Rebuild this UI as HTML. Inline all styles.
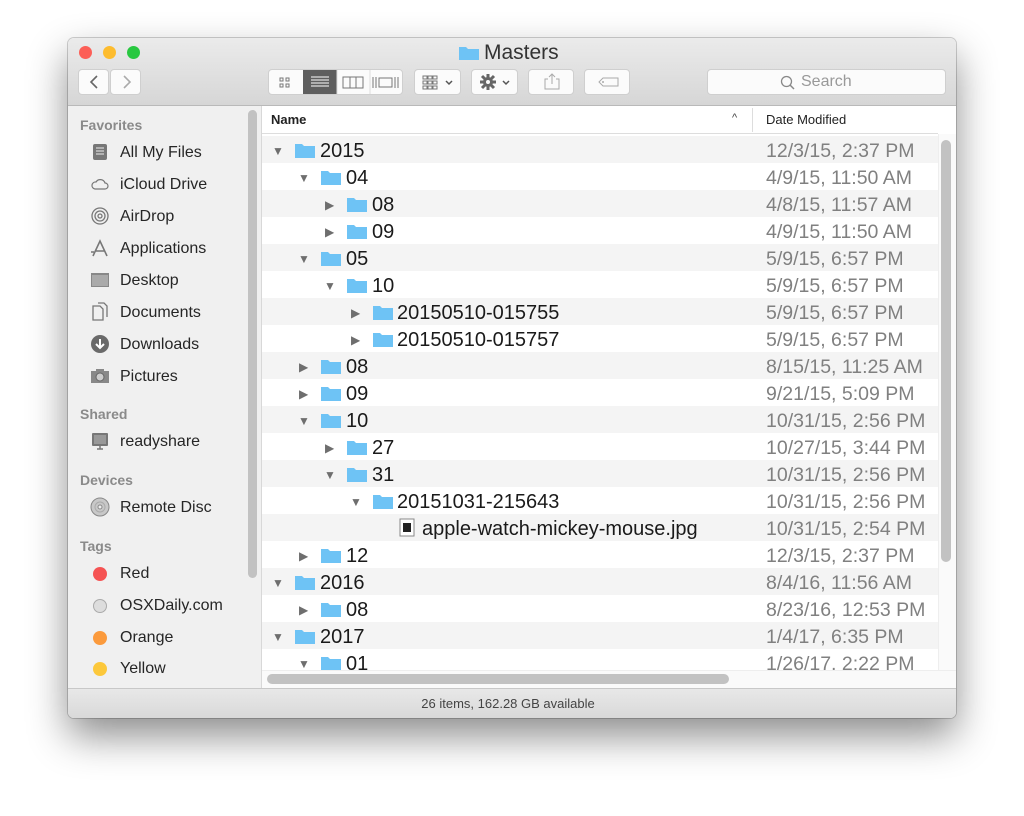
<!DOCTYPE html>
<html><head><meta charset="utf-8"><style>
*{margin:0;padding:0;box-sizing:border-box}
body{width:1024px;height:816px;background:#fff;position:relative;overflow:hidden;font-family:"Liberation Sans",sans-serif}
.a{position:absolute}
#win{left:68px;top:38px;width:888px;height:680px;border-radius:6px;background:#fff;box-shadow:0 18px 40px rgba(0,0,0,.45),0 0 0 1px rgba(0,0,0,.18);overflow:hidden}
#tb{left:0;top:0;width:888px;height:68px;background:linear-gradient(#ebebeb,#d6d6d6);border-bottom:1px solid #b9b9b9}
.dot{width:13px;height:13px;border-radius:50%;top:8px}
.btn{background:#fbfbfb;border:1px solid #cfcfcf;border-radius:4px;height:26px;top:31px}
#side{left:0;top:68px;width:194px;height:582px;background:#f0f0f0;border-right:1px solid #d8d8d8}
.sh{left:12px;font-size:14px;font-weight:bold;color:#8a8a8a}
.si{left:52px;font-size:16px;color:#262626}
.ic{left:22px;width:20px;height:20px}
.row{left:194px;width:676px;height:27px}
.row.g{background:#f4f4f4}
.nm{font-size:20px;color:#1a1a1a;top:4px}
.dt{right:0;width:176px;font-size:19.5px;color:#808080;top:4px;left:504px}
.tri{font-size:12px;color:#6e6e6e;top:8px}
</style></head><body>
<div id="win" class="a">
 <div id="tb" class="a">
  <div class="a dot" style="left:11px;background:#fc5f57"></div>
  <div class="a dot" style="left:35px;background:#fdbc2e"></div>
  <div class="a dot" style="left:59px;background:#28c840"></div>
  <svg class="a" style="left:390px;top:6px" width="22" height="17"><path d="M1 3h7l2 2h11v11H1z" fill="#6ec3f5"/></svg>
  <div class="a" style="left:416px;top:3px;font-size:21px;color:#333">Masters</div>
  <div class="a btn" style="left:10px;width:31px"><svg width="31" height="24"><path d="M18 6l-6 6 6 6" stroke="#666" stroke-width="1.6" fill="none"/></svg></div>
  <div class="a btn" style="left:42px;width:31px"><svg width="31" height="24"><path d="M13 6l6 6-6 6" stroke="#aaa" stroke-width="1.6" fill="none"/></svg></div>
  <div class="a btn" style="left:200px;width:135px;overflow:hidden">
   <svg class="a" style="left:0;top:0" width="135" height="24">
    <g stroke="#777" fill="none" stroke-width="1"><rect x="11" y="8" width="3" height="3"/><rect x="17" y="8" width="3" height="3"/><rect x="11" y="14" width="3" height="3"/><rect x="17" y="14" width="3" height="3"/></g>
    <rect x="34" y="0" width="34" height="24" fill="#5f5f5f"/>
    <g stroke="#fff" stroke-width="1"><path d="M42 7h18M42 10h18M42 13h18M42 16h18"/></g>
    <rect x="74" y="7" width="20" height="11" stroke="#777" fill="none"/><path d="M81 7v11M87 7v11" stroke="#777"/>
    <path d="M104 7v11M107 7v11M126 7v11M129 7v11" stroke="#777"/><rect x="110" y="8" width="13" height="9" stroke="#777" fill="none"/>
    <path d="M68 0v24M101 0v24" stroke="#ddd"/>
   </svg>
  </div>
  <div class="a btn" style="left:346px;width:47px"><svg width="47" height="24"><g fill="none" stroke="#777"><rect x="8" y="6" width="4" height="3"/><rect x="13" y="6" width="4" height="3"/><rect x="18" y="6" width="4" height="3"/><rect x="8" y="11" width="4" height="3"/><rect x="13" y="11" width="4" height="3"/><rect x="18" y="11" width="4" height="3"/><rect x="8" y="16" width="4" height="3"/><rect x="13" y="16" width="4" height="3"/><rect x="18" y="16" width="4" height="3"/></g><path d="M31 11l3 3 3-3" stroke="#555" stroke-width="1.5" fill="none"/></svg></div>
  <div class="a btn" style="left:403px;width:47px"><svg width="47" height="24"><circle cx="16" cy="12" r="5" fill="#666"/><g stroke="#666" stroke-width="3"><path d="M16 4v16M8 12h16M10 6l12 12M22 6L10 18"/></g><circle cx="16" cy="12" r="2" fill="#fbfbfb"/><path d="M31 11l3 3 3-3" stroke="#555" stroke-width="1.5" fill="none"/></svg></div>
  <div class="a btn" style="left:460px;width:46px"><svg width="46" height="24"><path d="M19 9h-3v10h14V9h-3M23 4v10M20 7l3-3 3 3" stroke="#aaa" fill="none"/></svg></div>
  <div class="a btn" style="left:516px;width:46px"><svg width="46" height="24"><path d="M14 12l4-4h15v8H18z" stroke="#aaa" fill="none"/><circle cx="18" cy="12" r="1" fill="#aaa"/></svg></div>
  <div class="a btn" style="left:639px;width:239px"><svg class="a" style="left:72px;top:5px" width="16" height="16"><circle cx="6.5" cy="6.5" r="5" stroke="#888" stroke-width="1.3" fill="none"/><path d="M10 10l4 4" stroke="#888" stroke-width="1.5"/></svg><div class="a" style="left:93px;top:3px;font-size:16px;color:#999">Search</div></div>
 </div>
 <div id="side" class="a">
  <div class="a sh" style="top:11px">Favorites</div>
  <svg class="a ic" style="top:36px" viewBox="0 0 20 20"><rect x="3" y="2" width="14" height="16" rx="2" fill="#777"/><path d="M6 6h8M6 9h8M6 12h8" stroke="#eee"/></svg><div class="a si" style="top:38px">All My Files</div>
  <svg class="a ic" style="top:68px" viewBox="0 0 20 20"><path d="M5 15h10a3 3 0 0 0 0-6 5 5 0 0 0-9-1 3.5 3.5 0 0 0-1 7z" stroke="#777" fill="none" stroke-width="1.2"/></svg><div class="a si" style="top:70px">iCloud Drive</div>
  <svg class="a ic" style="top:100px" viewBox="0 0 20 20"><g stroke="#777" fill="none" stroke-width="1.3"><circle cx="10" cy="10" r="8"/><circle cx="10" cy="10" r="5"/><circle cx="10" cy="10" r="2"/></g></svg><div class="a si" style="top:102px">AirDrop</div>
  <svg class="a ic" style="top:132px" viewBox="0 0 20 20"><path d="M3 18L10 3l7 15M5 13h10M1 14h3" stroke="#777" stroke-width="1.6" fill="none"/></svg><div class="a si" style="top:134px">Applications</div>
  <svg class="a ic" style="top:164px" viewBox="0 0 20 20"><rect x="1" y="3" width="18" height="14" fill="#888"/><rect x="2" y="5" width="16" height="11" fill="#aaa"/></svg><div class="a si" style="top:166px">Desktop</div>
  <svg class="a ic" style="top:196px" viewBox="0 0 20 20"><path d="M3 4h7l3 3v11H3z M8 1h6l3 3v11" stroke="#777" stroke-width="1.3" fill="#f0f0f0"/></svg><div class="a si" style="top:198px">Documents</div>
  <svg class="a ic" style="top:228px" viewBox="0 0 20 20"><circle cx="10" cy="10" r="9" fill="#6a6a6a"/><path d="M10 5v8M6 10l4 4 4-4" stroke="#fff" stroke-width="2" fill="none"/></svg><div class="a si" style="top:230px">Downloads</div>
  <svg class="a ic" style="top:260px" viewBox="0 0 20 20"><rect x="1" y="5" width="18" height="12" fill="#888"/><rect x="6" y="3" width="8" height="3" fill="#888"/><circle cx="10" cy="11" r="4" fill="#ccc" stroke="#666"/></svg><div class="a si" style="top:262px">Pictures</div>
  <div class="a sh" style="top:300px">Shared</div>
  <svg class="a ic" style="top:325px" viewBox="0 0 20 20"><rect x="2" y="2" width="16" height="13" rx="1" fill="#777"/><rect x="4" y="4" width="12" height="9" fill="#999"/><path d="M7 18h6M10 15v3" stroke="#777" stroke-width="1.5"/></svg><div class="a si" style="top:327px">readyshare</div>
  <div class="a sh" style="top:366px">Devices</div>
  <svg class="a ic" style="top:391px" viewBox="0 0 20 20"><circle cx="10" cy="10" r="9" fill="#c8c8c8" stroke="#888"/><circle cx="10" cy="10" r="5" fill="none" stroke="#aaa"/><circle cx="10" cy="10" r="2" fill="#eee" stroke="#888"/></svg><div class="a si" style="top:393px">Remote Disc</div>
  <div class="a sh" style="top:432px">Tags</div>
  <div class="a" style="left:25px;top:461px;width:14px;height:14px;border-radius:50%;background:#f55353"></div><div class="a si" style="top:459px">Red</div>
  <div class="a" style="left:25px;top:493px;width:14px;height:14px;border-radius:50%;background:#ddd;border:1px solid #aaa"></div><div class="a si" style="top:491px">OSXDaily.com</div>
  <div class="a" style="left:25px;top:525px;width:14px;height:14px;border-radius:50%;background:#fb9a3c"></div><div class="a si" style="top:523px">Orange</div>
  <div class="a" style="left:25px;top:556px;width:14px;height:14px;border-radius:50%;background:#fcc83b"></div><div class="a si" style="top:554px">Yellow</div>
  <div class="a" style="left:180px;top:4px;width:9px;height:468px;border-radius:5px;background:#c2c2c2"></div>
 </div>
 <div class="a" style="left:194px;top:68px;width:676px;height:28px;background:#fff;border-bottom:1px solid #ddd"></div>
 <div class="a" style="left:203px;top:74px;font-size:13px;font-weight:bold;color:#222">Name</div>
 <div class="a" style="left:664px;top:74px;font-size:11px;color:#444">^</div>
 <div class="a" style="left:684px;top:70px;width:1px;height:24px;background:#ddd"></div>
 <div class="a" style="left:698px;top:74px;font-size:13px;color:#222">Date Modified</div>
 <div class="a" style="left:-68px;top:-38px">
  <div class="a row g" style="top:136px;left:262px"><span class="a tri" style="left:10px">▼</span><svg class="a" style="left:33px;top:6px" width="20" height="16"><path d="M0 2h7l2 2h11v12H0z" fill="#6ec3f5"/></svg><span class="a nm" style="left:58px">2015</span><span class="a dt">12/3/15, 2:37 PM</span></div>
  <div class="a row" style="top:163px;left:262px"><span class="a tri" style="left:36px">▼</span><svg class="a" style="left:59px;top:6px" width="20" height="16"><path d="M0 2h7l2 2h11v12H0z" fill="#6ec3f5"/></svg><span class="a nm" style="left:84px">04</span><span class="a dt">4/9/15, 11:50 AM</span></div>
  <div class="a row g" style="top:190px;left:262px"><span class="a tri" style="left:63px">▶</span><svg class="a" style="left:85px;top:6px" width="20" height="16"><path d="M0 2h7l2 2h11v12H0z" fill="#6ec3f5"/></svg><span class="a nm" style="left:110px">08</span><span class="a dt">4/8/15, 11:57 AM</span></div>
  <div class="a row" style="top:217px;left:262px"><span class="a tri" style="left:63px">▶</span><svg class="a" style="left:85px;top:6px" width="20" height="16"><path d="M0 2h7l2 2h11v12H0z" fill="#6ec3f5"/></svg><span class="a nm" style="left:110px">09</span><span class="a dt">4/9/15, 11:50 AM</span></div>
  <div class="a row g" style="top:244px;left:262px"><span class="a tri" style="left:36px">▼</span><svg class="a" style="left:59px;top:6px" width="20" height="16"><path d="M0 2h7l2 2h11v12H0z" fill="#6ec3f5"/></svg><span class="a nm" style="left:84px">05</span><span class="a dt">5/9/15, 6:57 PM</span></div>
  <div class="a row" style="top:271px;left:262px"><span class="a tri" style="left:62px">▼</span><svg class="a" style="left:85px;top:6px" width="20" height="16"><path d="M0 2h7l2 2h11v12H0z" fill="#6ec3f5"/></svg><span class="a nm" style="left:110px">10</span><span class="a dt">5/9/15, 6:57 PM</span></div>
  <div class="a row g" style="top:298px;left:262px"><span class="a tri" style="left:89px">▶</span><svg class="a" style="left:111px;top:6px" width="20" height="16"><path d="M0 2h7l2 2h11v12H0z" fill="#6ec3f5"/></svg><span class="a nm" style="left:135px">20150510-015755</span><span class="a dt">5/9/15, 6:57 PM</span></div>
  <div class="a row" style="top:325px;left:262px"><span class="a tri" style="left:89px">▶</span><svg class="a" style="left:111px;top:6px" width="20" height="16"><path d="M0 2h7l2 2h11v12H0z" fill="#6ec3f5"/></svg><span class="a nm" style="left:135px">20150510-015757</span><span class="a dt">5/9/15, 6:57 PM</span></div>
  <div class="a row g" style="top:352px;left:262px"><span class="a tri" style="left:37px">▶</span><svg class="a" style="left:59px;top:6px" width="20" height="16"><path d="M0 2h7l2 2h11v12H0z" fill="#6ec3f5"/></svg><span class="a nm" style="left:84px">08</span><span class="a dt">8/15/15, 11:25 AM</span></div>
  <div class="a row" style="top:379px;left:262px"><span class="a tri" style="left:37px">▶</span><svg class="a" style="left:59px;top:6px" width="20" height="16"><path d="M0 2h7l2 2h11v12H0z" fill="#6ec3f5"/></svg><span class="a nm" style="left:84px">09</span><span class="a dt">9/21/15, 5:09 PM</span></div>
  <div class="a row g" style="top:406px;left:262px"><span class="a tri" style="left:36px">▼</span><svg class="a" style="left:59px;top:6px" width="20" height="16"><path d="M0 2h7l2 2h11v12H0z" fill="#6ec3f5"/></svg><span class="a nm" style="left:84px">10</span><span class="a dt">10/31/15, 2:56 PM</span></div>
  <div class="a row" style="top:433px;left:262px"><span class="a tri" style="left:63px">▶</span><svg class="a" style="left:85px;top:6px" width="20" height="16"><path d="M0 2h7l2 2h11v12H0z" fill="#6ec3f5"/></svg><span class="a nm" style="left:110px">27</span><span class="a dt">10/27/15, 3:44 PM</span></div>
  <div class="a row g" style="top:460px;left:262px"><span class="a tri" style="left:62px">▼</span><svg class="a" style="left:85px;top:6px" width="20" height="16"><path d="M0 2h7l2 2h11v12H0z" fill="#6ec3f5"/></svg><span class="a nm" style="left:110px">31</span><span class="a dt">10/31/15, 2:56 PM</span></div>
  <div class="a row" style="top:487px;left:262px"><span class="a tri" style="left:88px">▼</span><svg class="a" style="left:111px;top:6px" width="20" height="16"><path d="M0 2h7l2 2h11v12H0z" fill="#6ec3f5"/></svg><span class="a nm" style="left:135px">20151031-215643</span><span class="a dt">10/31/15, 2:56 PM</span></div>
  <div class="a row g" style="top:514px;left:262px"><svg class="a" style="left:137px;top:4px" width="16" height="19"><rect x="1" y="1" width="14" height="17" fill="#fff" stroke="#888"/><rect x="4" y="5" width="8" height="9" fill="#222"/></svg><span class="a nm" style="left:160px">apple-watch-mickey-mouse.jpg</span><span class="a dt">10/31/15, 2:54 PM</span></div>
  <div class="a row" style="top:541px;left:262px"><span class="a tri" style="left:37px">▶</span><svg class="a" style="left:59px;top:6px" width="20" height="16"><path d="M0 2h7l2 2h11v12H0z" fill="#6ec3f5"/></svg><span class="a nm" style="left:84px">12</span><span class="a dt">12/3/15, 2:37 PM</span></div>
  <div class="a row g" style="top:568px;left:262px"><span class="a tri" style="left:10px">▼</span><svg class="a" style="left:33px;top:6px" width="20" height="16"><path d="M0 2h7l2 2h11v12H0z" fill="#6ec3f5"/></svg><span class="a nm" style="left:58px">2016</span><span class="a dt">8/4/16, 11:56 AM</span></div>
  <div class="a row" style="top:595px;left:262px"><span class="a tri" style="left:37px">▶</span><svg class="a" style="left:59px;top:6px" width="20" height="16"><path d="M0 2h7l2 2h11v12H0z" fill="#6ec3f5"/></svg><span class="a nm" style="left:84px">08</span><span class="a dt">8/23/16, 12:53 PM</span></div>
  <div class="a row g" style="top:622px;left:262px"><span class="a tri" style="left:10px">▼</span><svg class="a" style="left:33px;top:6px" width="20" height="16"><path d="M0 2h7l2 2h11v12H0z" fill="#6ec3f5"/></svg><span class="a nm" style="left:58px">2017</span><span class="a dt">1/4/17, 6:35 PM</span></div>
  <div class="a row" style="top:649px;left:262px"><span class="a tri" style="left:36px">▼</span><svg class="a" style="left:59px;top:6px" width="20" height="16"><path d="M0 2h7l2 2h11v12H0z" fill="#6ec3f5"/></svg><span class="a nm" style="left:84px">01</span><span class="a dt">1/26/17, 2:22 PM</span></div>
 </div>
 <div class="a" style="left:870px;top:96px;width:18px;height:554px;background:#fafafa;border-left:1px solid #eee"></div>
 <div class="a" style="left:873px;top:102px;width:10px;height:422px;border-radius:5px;background:#c2c2c2"></div>
 <div class="a" style="left:194px;top:632px;width:694px;height:18px;background:#fafafa;border-top:1px solid #eee"></div>
 <div class="a" style="left:199px;top:636px;width:462px;height:10px;border-radius:5px;background:#c2c2c2"></div>
 <div class="a" style="left:0;top:650px;width:888px;height:30px;background:linear-gradient(#e8e8e8,#d9d9d9);border-top:1px solid #c8c8c8"></div>
 <div class="a" style="left:0;top:658px;width:880px;text-align:center;font-size:13px;color:#444">26 items, 162.28 GB available</div>
</div>
</body></html>
